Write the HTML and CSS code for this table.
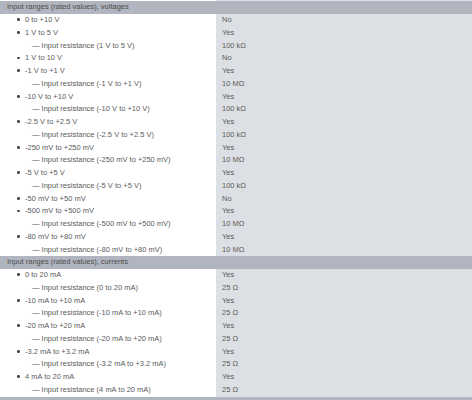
FILE: index.html
```html
<!DOCTYPE html>
<html lang="en">
<head>
  <meta charset="UTF-8">
  <title>Input ranges</title>
  <link rel="stylesheet" href="styles.css">
</head>
<body>
  <div class="specs">
    <div class="row stub"><div class="label"></div><div class="value"></div></div>

    <div class="row head"><div class="label">Input ranges (rated values), voltages</div><div class="value"></div></div>
    <div class="row"><div class="label item">0 to +10 V</div><div class="value">No</div></div>
    <div class="row"><div class="label item">1 V to 5 V</div><div class="value">Yes</div></div>
    <div class="row"><div class="label sub">Input resistance (1 V to 5 V)</div><div class="value">100 kΩ</div></div>
    <div class="row"><div class="label item">1 V to 10 V</div><div class="value">No</div></div>
    <div class="row"><div class="label item">-1 V to +1 V</div><div class="value">Yes</div></div>
    <div class="row"><div class="label sub">Input resistance (-1 V to +1 V)</div><div class="value">10 MΩ</div></div>
    <div class="row"><div class="label item">-10 V to +10 V</div><div class="value">Yes</div></div>
    <div class="row"><div class="label sub">Input resistance (-10 V to +10 V)</div><div class="value">100 kΩ</div></div>
    <div class="row"><div class="label item">-2.5 V to +2.5 V</div><div class="value">Yes</div></div>
    <div class="row"><div class="label sub">Input resistance (-2.5 V to +2.5 V)</div><div class="value">100 kΩ</div></div>
    <div class="row"><div class="label item">-250 mV to +250 mV</div><div class="value">Yes</div></div>
    <div class="row"><div class="label sub">Input resistance (-250 mV to +250 mV)</div><div class="value">10 MΩ</div></div>
    <div class="row"><div class="label item">-5 V to +5 V</div><div class="value">Yes</div></div>
    <div class="row"><div class="label sub">Input resistance (-5 V to +5 V)</div><div class="value">100 kΩ</div></div>
    <div class="row"><div class="label item">-50 mV to +50 mV</div><div class="value">No</div></div>
    <div class="row"><div class="label item">-500 mV to +500 mV</div><div class="value">Yes</div></div>
    <div class="row"><div class="label sub">Input resistance (-500 mV to +500 mV)</div><div class="value">10 MΩ</div></div>
    <div class="row"><div class="label item">-80 mV to +80 mV</div><div class="value">Yes</div></div>
    <div class="row"><div class="label sub">Input resistance (-80 mV to +80 mV)</div><div class="value">10 MΩ</div></div>

    <div class="row head"><div class="label">Input ranges (rated values), currents</div><div class="value"></div></div>
    <div class="row"><div class="label item">0 to 20 mA</div><div class="value">Yes</div></div>
    <div class="row"><div class="label sub">Input resistance (0 to 20 mA)</div><div class="value">25 Ω</div></div>
    <div class="row"><div class="label item">-10 mA to +10 mA</div><div class="value">Yes</div></div>
    <div class="row"><div class="label sub">Input resistance (-10 mA to +10 mA)</div><div class="value">25 Ω</div></div>
    <div class="row"><div class="label item">-20 mA to +20 mA</div><div class="value">Yes</div></div>
    <div class="row"><div class="label sub">Input resistance (-20 mA to +20 mA)</div><div class="value">25 Ω</div></div>
    <div class="row"><div class="label item">-3.2 mA to +3.2 mA</div><div class="value">Yes</div></div>
    <div class="row"><div class="label sub">Input resistance (-3.2 mA to +3.2 mA)</div><div class="value">25 Ω</div></div>
    <div class="row"><div class="label item">4 mA to 20 mA</div><div class="value">Yes</div></div>
    <div class="row"><div class="label sub">Input resistance (4 mA to 20 mA)</div><div class="value">25 Ω</div></div>

    <div class="row head"><div class="label"></div><div class="value"></div></div>
  </div>
</body>
</html>
```

FILE: styles.css
```css
body {
  margin: 0;
  background: #fff;
  font-family: "Liberation Sans", Arial, sans-serif;
  font-size: 7.5px;
  color: #5b5b5b;
}
.specs {
  display: flex;
  flex-direction: column;
}
.row {
  display: grid;
  grid-template-columns: 216px 1fr;
  height: 12.75px;
  line-height: 12.75px;
  flex-shrink: 0;
}
.row.stub {
  height: 1.3px;
}
.label {
  padding-left: 25px;
  white-space: nowrap;
  overflow: hidden;
}
.value {
  background: #dce0e4;
  padding-left: 6px;
  white-space: nowrap;
}
.item::before {
  content: "";
  display: inline-block;
  width: 2.6px;
  height: 2.6px;
  border-radius: 50%;
  background: #4a4a4a;
  margin-left: -7.6px;
  margin-right: 5px;
  vertical-align: 1px;
}
.sub {
  padding-left: 32px;
}
.sub::before {
  content: "\2014  ";
  white-space: pre;
}
.row.head {
  background: #b1b5bf;
  color: #4c4c4c;
}
.row.head .label {
  padding-left: 7px;
}
.row.head .value {
  background: transparent;
}
```
